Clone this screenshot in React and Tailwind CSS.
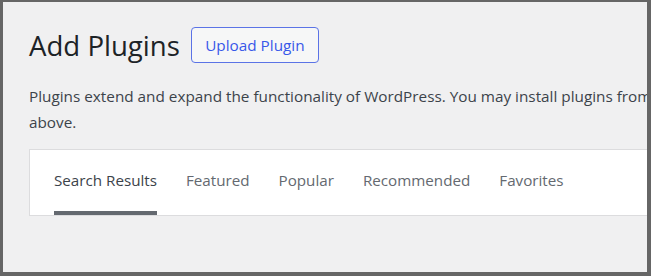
import React from 'react';

const tabs = ['Search Results', 'Featured', 'Popular', 'Recommended', 'Favorites'];

export default function App() {
  return (
    <div
      className="w-[651px] h-[276px] border-l-[3px] border-t-[2px] border-r-[4px] border-b-[4px] border-[#666666] bg-[#f0f0f1] overflow-hidden"
      style={{ fontFamily: '"Open Sans", "Noto Sans", sans-serif' }}
    >
      <div className="pl-[26px] pt-[25px]">
        <div className="flex items-center gap-[11px]">
          <h1 className="text-[27.6px] leading-[36px] font-normal text-[#1d2327]">Add Plugins</h1>
          <button className="h-[36px] w-[128px] rounded-[4px] border border-[#5b73e6] bg-[#f6f7f7] text-[15.3px] text-[#3858e9]">
            Upload Plugin
          </button>
        </div>

        <p className="mt-[20px] w-[700px] text-[15.3px] leading-[26px] text-[#3c434a]">
          <span className="block whitespace-nowrap">
            Plugins extend and expand the functionality of WordPress. You may install plugins from
          </span>
          <span className="block">above.</span>
        </p>

        <div className="mt-[14px] w-[700px] h-[67px] border border-[#dcdcde] bg-white">
          <ul className="flex gap-[29px] pl-[24px] h-full">
            {tabs.map((t, i) => (
              <li
                key={t}
                className={
                  'flex items-center h-full text-[15.2px] border-b-4 ' +
                  (i === 0 ? 'border-[#646970] text-[#3c434a]' : 'border-transparent text-[#646970]')
                }
              >
                {t}
              </li>
            ))}
          </ul>
        </div>
      </div>
    </div>
  );
}
